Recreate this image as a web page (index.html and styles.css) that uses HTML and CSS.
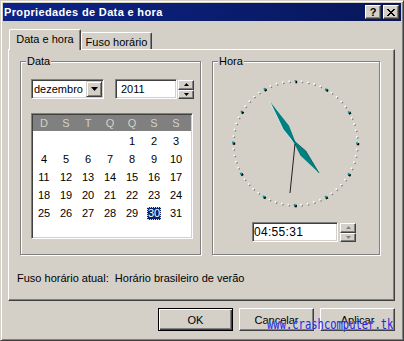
FILE: index.html
```html
<!DOCTYPE html>
<html lang="pt-BR">
<head>
<meta charset="utf-8">
<title>Propriedades de Data e hora</title>
<link rel="stylesheet" href="styles.css">
</head>
<body>
<div class="window">
  <div class="titlebar">
    <span class="title">Propriedades de Data e hora</span>
    <div class="tbtns">
      <span class="tbtn help">?</span>
      <span class="tbtn close"><svg width="8" height="7" viewBox="0 0 8 7"><path d="M0 0h2v1h-2zM6 0h2v1h-2zM1 1h2v1h-2zM5 1h2v1h-2zM2 2h4v1h-4zM3 3h2v1h-2zM2 4h4v1h-4zM1 5h2v1h-2zM5 5h2v1h-2zM0 6h2v1h-2zM6 6h2v1h-2z" fill="#000"/></svg></span>
    </div>
  </div>
  <div class="client">
    <div class="tabs">
      <div class="tab active">Data e hora</div>
      <div class="tab">Fuso horário</div>
    </div>
    <div class="panel">
      <div class="groups">
        <div class="group date">
          <span class="legend">Data</span>
          <div class="daterow">
            <div class="combo">
              <span class="combo-text">dezembro</span>
              <span class="dropbtn"><svg width="7" height="4" viewBox="0 0 7 4"><path d="M0 0h7l-3.5 4z" fill="#000"/></svg></span>
            </div>
            <div class="edit year">2011</div>
            <div class="spin">
              <span class="spinbtn"><svg width="5" height="3" viewBox="0 0 5 3"><path d="M2.5 0l2.5 3h-5z" fill="#000"/></svg></span>
              <span class="spinbtn"><svg width="5" height="3" viewBox="0 0 5 3"><path d="M0 0h5l-2.5 3z" fill="#000"/></svg></span>
            </div>
          </div>
          <div class="calendar">
            <div class="cal-head">
              <span>D</span><span>S</span><span>T</span><span>Q</span><span>Q</span><span>S</span><span>S</span>
            </div>
            <div class="cal-days">
              <span></span><span></span><span></span><span></span><span>1</span><span>2</span><span>3</span>
              <span>4</span><span>5</span><span>6</span><span>7</span><span>8</span><span>9</span><span>10</span>
              <span>11</span><span>12</span><span>13</span><span>14</span><span>15</span><span>16</span><span>17</span>
              <span>18</span><span>19</span><span>20</span><span>21</span><span>22</span><span>23</span><span>24</span>
              <span>25</span><span>26</span><span>27</span><span>28</span><span>29</span><span class="sel">30</span><span>31</span>
            </div>
          </div>
        </div>
        <div class="group time">
          <span class="legend">Hora</span>
          <svg class="clock" width="140" height="140" viewBox="0 0 140 140">
            <circle cx="71" cy="71" r="62" fill="none" stroke="#808080" stroke-width="1.6" stroke-dasharray="1.6 4.8926" stroke-dashoffset="0.8" transform="rotate(-90 71 71)"/>
            <circle cx="70" cy="70" r="62" fill="none" stroke="#ffffff" stroke-width="1.6" stroke-dasharray="1.6 4.8926" stroke-dashoffset="0.8" transform="rotate(-90 70 70)"/>
            <circle cx="71" cy="71" r="62" fill="none" stroke="#000000" stroke-width="2.4" stroke-dasharray="2.4 30.063" stroke-dashoffset="1.2" transform="rotate(-90 71 71)"/>
            <circle cx="70" cy="70" r="62" fill="none" stroke="#00a0a0" stroke-width="2" stroke-dasharray="2 30.463" stroke-dashoffset="1" transform="rotate(-90 70 70)"/>
            <polygon points="44.5,28 64,52.7 72.5,74.3 58,56.2" fill="#008080"/>
            <polyline points="44.5,28 58,56.2 72.5,74.3" fill="none" stroke="#e8f4f4" stroke-width="0.8"/>
            <polygon points="94,100 80.8,78 66.9,66.1 75.4,82.4" fill="#008080"/>
            <polyline points="94,100 80.8,78 66.9,66.1" fill="none" stroke="#005858" stroke-width="0.8"/>
            <line x1="70" y1="71" x2="65" y2="120" stroke="#202020" stroke-width="1"/>
          </svg>
          <div class="timerow">
            <div class="edit timeedit">04:55:31</div>
            <div class="spin">
              <span class="spinbtn"><svg width="5" height="3" viewBox="0 0 5 3"><path d="M2.5 0l2.5 3h-5z" fill="#808080"/></svg></span>
              <span class="spinbtn"><svg width="5" height="3" viewBox="0 0 5 3"><path d="M0 0h5l-2.5 3z" fill="#808080"/></svg></span>
            </div>
          </div>
        </div>
      </div>
      <div class="tz">Fuso horário atual:&nbsp; Horário brasileiro de verão</div>
    </div>
    <div class="buttons">
      <button class="btn default">OK</button>
      <button class="btn">Cancelar</button>
      <button class="btn">Aplicar</button>
    </div>
  </div>
  <div class="watermark">www.crashcomputer.tk</div>
</div>
</body>
</html>
```
FILE: styles.css
```css
html, body {
  margin: 0;
  padding: 0;
  background: #d4d0c8;
}
body {
  font-family: "Liberation Sans", Arial, sans-serif;
  font-size: 11px;
  color: #000;
  overflow: hidden;
}
.window {
  position: relative;
  width: 404px;
  height: 341px;
  box-sizing: border-box;
  background: #d4d0c8;
  border: 1px solid;
  border-color: #d4d0c8 #404040 #404040 #d4d0c8;
  box-shadow: inset 1px 1px #fff, inset -1px -1px #808080;
  padding: 2px;
}
.titlebar {
  height: 18px;
  display: flex;
  align-items: center;
  background: linear-gradient(90deg, #0b2488 0%, #0a1d70 50%, #08175a 100%);
}
.title {
  flex: 1;
  color: #fff;
  font-weight: bold;
  letter-spacing: 0.35px;
  padding-left: 1px;
  white-space: nowrap;
}
.tbtns {
  display: flex;
  gap: 2px;
  margin-right: 2px;
}
.tbtn {
  width: 16px;
  height: 14px;
  box-sizing: border-box;
  background: #d4d0c8;
  border: 1px solid;
  border-color: #fff #404040 #404040 #fff;
  box-shadow: inset -1px -1px #808080;
  display: flex;
  align-items: center;
  justify-content: center;
  font-weight: bold;
  font-size: 11px;
  line-height: 1;
}
.client {
  display: flex;
  flex-direction: column;
}
.tabs {
  display: flex;
  align-items: flex-end;
  height: 20px;
  margin-top: 8px;
  padding-left: 6px;
}
.tab {
  width: 71px;
  height: 17px;
  box-sizing: border-box;
  border-top: 1px solid #fff;
  border-left: 1px solid #fff;
  border-right: 1px solid #404040;
  border-radius: 2px 2px 0 0;
  box-shadow: inset -1px 0 #808080;
  display: flex;
  align-items: center;
  justify-content: center;
  padding-top: 1px;
  white-space: nowrap;
}
.tab.active {
  width: 72px;
  height: 21px;
  margin-bottom: -1px;
  position: relative;
  z-index: 1;
  background: #d4d0c8;
  padding-top: 0;
  padding-bottom: 2px;
}
.panel {
  margin-left: 5px;
  width: 387px;
  height: 252px;
  box-sizing: border-box;
  border: 1px solid;
  border-color: #fff #404040 #404040 #fff;
  box-shadow: inset -1px -1px #808080;
  padding: 11px 0 0 11px;
}
.groups {
  display: flex;
  gap: 11px;
}
.group {
  position: relative;
  box-sizing: border-box;
  height: 194px;
  border: 1px solid #808080;
  box-shadow: inset 1px 1px #fff, 1px 1px #fff;
}
.group.date {
  width: 181px;
  padding: 17px 0 0 10px;
}
.group.time {
  width: 168px;
  padding: 11px 0 0 12px;
}
.legend {
  position: absolute;
  top: -7px;
  left: 5px;
  padding: 0 1px;
  line-height: 13px;
  background: #d4d0c8;
}
.daterow {
  display: flex;
  height: 20px;
}
.combo {
  width: 73px;
  height: 20px;
  box-sizing: border-box;
  background: #fff;
  border: 1px solid;
  border-color: #808080 #fff #fff #808080;
  box-shadow: inset 1px 1px #404040, inset -1px -1px #d4d0c8;
  padding: 1px;
  display: flex;
  align-items: center;
}
.combo-text {
  flex: 1;
  padding-left: 1px;
}
.dropbtn {
  width: 16px;
  height: 16px;
  box-sizing: border-box;
  background: #d4d0c8;
  border: 1px solid;
  border-color: #d4d0c8 #404040 #404040 #d4d0c8;
  box-shadow: inset 1px 1px #fff, inset -1px -1px #808080;
  display: flex;
  align-items: center;
  justify-content: center;
}
.edit {
  height: 20px;
  box-sizing: border-box;
  background: #fff;
  border: 1px solid;
  border-color: #808080 #fff #fff #808080;
  box-shadow: inset 1px 1px #404040, inset -1px -1px #d4d0c8;
  display: flex;
  align-items: center;
}
.edit.year {
  width: 62px;
  margin-left: 11px;
  padding-left: 5px;
}
.spin {
  width: 16px;
  height: 19px;
  margin-left: 1px;
  margin-top: 1px;
  display: flex;
  flex-direction: column;
}
.spinbtn {
  flex: 1;
  box-sizing: border-box;
  background: #d4d0c8;
  border: 1px solid;
  border-color: #fff #404040 #404040 #fff;
  box-shadow: inset -1px -1px #808080;
  display: flex;
  align-items: center;
  justify-content: center;
}
.calendar {
  margin-top: 14px;
  width: 162px;
  height: 126px;
  box-sizing: border-box;
  background: #fff;
  border: 1px solid;
  border-color: #808080 #fff #fff #808080;
  box-shadow: inset 1px 1px #404040, inset -1px -1px #d4d0c8;
  padding: 1px;
}
.cal-head {
  display: grid;
  grid-template-columns: repeat(7, 22px);
  height: 16px;
  align-items: center;
  justify-items: center;
  background: #808080;
  color: #d4d0c8;
}
.cal-days {
  display: grid;
  grid-template-columns: repeat(7, 22px);
  grid-auto-rows: 18px;
  margin-top: 1px;
  align-items: center;
  justify-items: center;
}
.cal-days .sel {
  background: #0a246a;
  color: #fff;
  outline: 1px dotted #e8e890;
  outline-offset: -1px;
  padding: 0 1px;
  line-height: 13px;
}
.clock {
  display: block;
}
.timerow {
  display: flex;
  margin-top: 9px;
  margin-left: 27px;
}
.edit.timeedit {
  width: 86px;
  padding-left: 1px;
  font-size: 12px;
  letter-spacing: 0.3px;
}
.timerow .spin {
  margin-left: 2px;
}
.tz {
  margin-top: 17px;
  margin-left: -3px;
  line-height: 13px;
  white-space: nowrap;
}
.buttons {
  display: flex;
  justify-content: flex-end;
  gap: 6px;
  margin-top: 7px;
  padding-right: 6px;
}
.btn {
  width: 75px;
  height: 23px;
  box-sizing: border-box;
  margin: 0;
  padding: 0;
  font-family: "Liberation Sans", Arial, sans-serif;
  font-size: 11px;
  color: #000;
  background: #d4d0c8;
  border: 1px solid;
  border-color: #fff #404040 #404040 #fff;
  box-shadow: inset -1px -1px #808080;
}
.btn.default {
  border: 1px solid #000;
  box-shadow: inset 1px 1px #fff, inset -1px -1px #404040, inset -2px -2px #808080;
}
.watermark {
  position: absolute;
  left: 266px;
  top: 319px;
  font-family: "DejaVu Sans Mono", monospace;
  font-size: 10.5px;
  line-height: 13px;
  color: #2828d0;
  white-space: nowrap;
  transform: scaleY(1.3);
  transform-origin: 0 100%;
  text-shadow: 0 0 1px #c8c8ff;
}
```
